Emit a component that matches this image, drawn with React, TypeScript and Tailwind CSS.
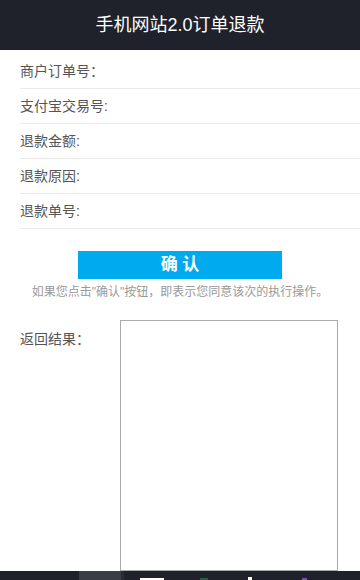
const rows = ['商户订单号：', '支付宝交易号:', '退款金额:', '退款原因:', '退款单号:'];

export default function App() {
  return (
    <div
      className="w-[360px] h-[580px] bg-white flex flex-col overflow-hidden"
      style={{ fontFamily: '"Liberation Sans", "Noto Sans CJK SC", sans-serif' }}
    >
      {/* Header */}
      <div className="h-[50px] bg-[#1f222b] text-white text-[18px] flex items-center justify-center shrink-0">
        手机网站2.0订单退款
      </div>

      {/* Form rows */}
      <div className="pl-5 mt-[4px]">
        {rows.map((label) => (
          <div key={label} className="h-[35px] border-b border-[#eaeaea] flex items-center text-[14px] text-[#555]">
            {label}
          </div>
        ))}
      </div>

      {/* Confirm */}
      <div className="flex flex-col items-center mt-[22px]">
        <button className="w-[204px] h-[28px] bg-[#00aaee] text-white text-[17px] font-bold flex items-center justify-center">
          确 认
        </button>
        <div className="text-[12px] text-[#999] mt-[6px] leading-[14px]">
          如果您点击"确认"按钮，即表示您同意该次的执行操作。
        </div>
      </div>

      {/* Result */}
      <div className="flex flex-1 mt-[21px] min-h-0">
        <div className="w-[120px] shrink-0 pl-5 pt-[9px] text-[14px] text-[#555]">返回结果：</div>
        <textarea className="w-[218px] h-full border border-[#aaa] resize-none outline-none" />
      </div>

      {/* Taskbar strip */}
      <div className="h-[9px] bg-[#1f222b] shrink-0 flex items-end">
        <div className="ml-[79px] w-[42px] h-full bg-[#3a3d45]" />
        <div className="w-[3px] h-full bg-[#2a2d35]" />
        <div className="ml-[16px] w-[24px] h-[2px] bg-white" />
        <div className="ml-[36px] w-[8px] h-[2px] bg-[#2e5a48]" />
        <div className="ml-[40px] w-[4px] h-[3px] bg-white" />
        <div className="ml-[50px] w-[5px] h-[2px] bg-[#6a5a9a]" />
      </div>
    </div>
  );
}
